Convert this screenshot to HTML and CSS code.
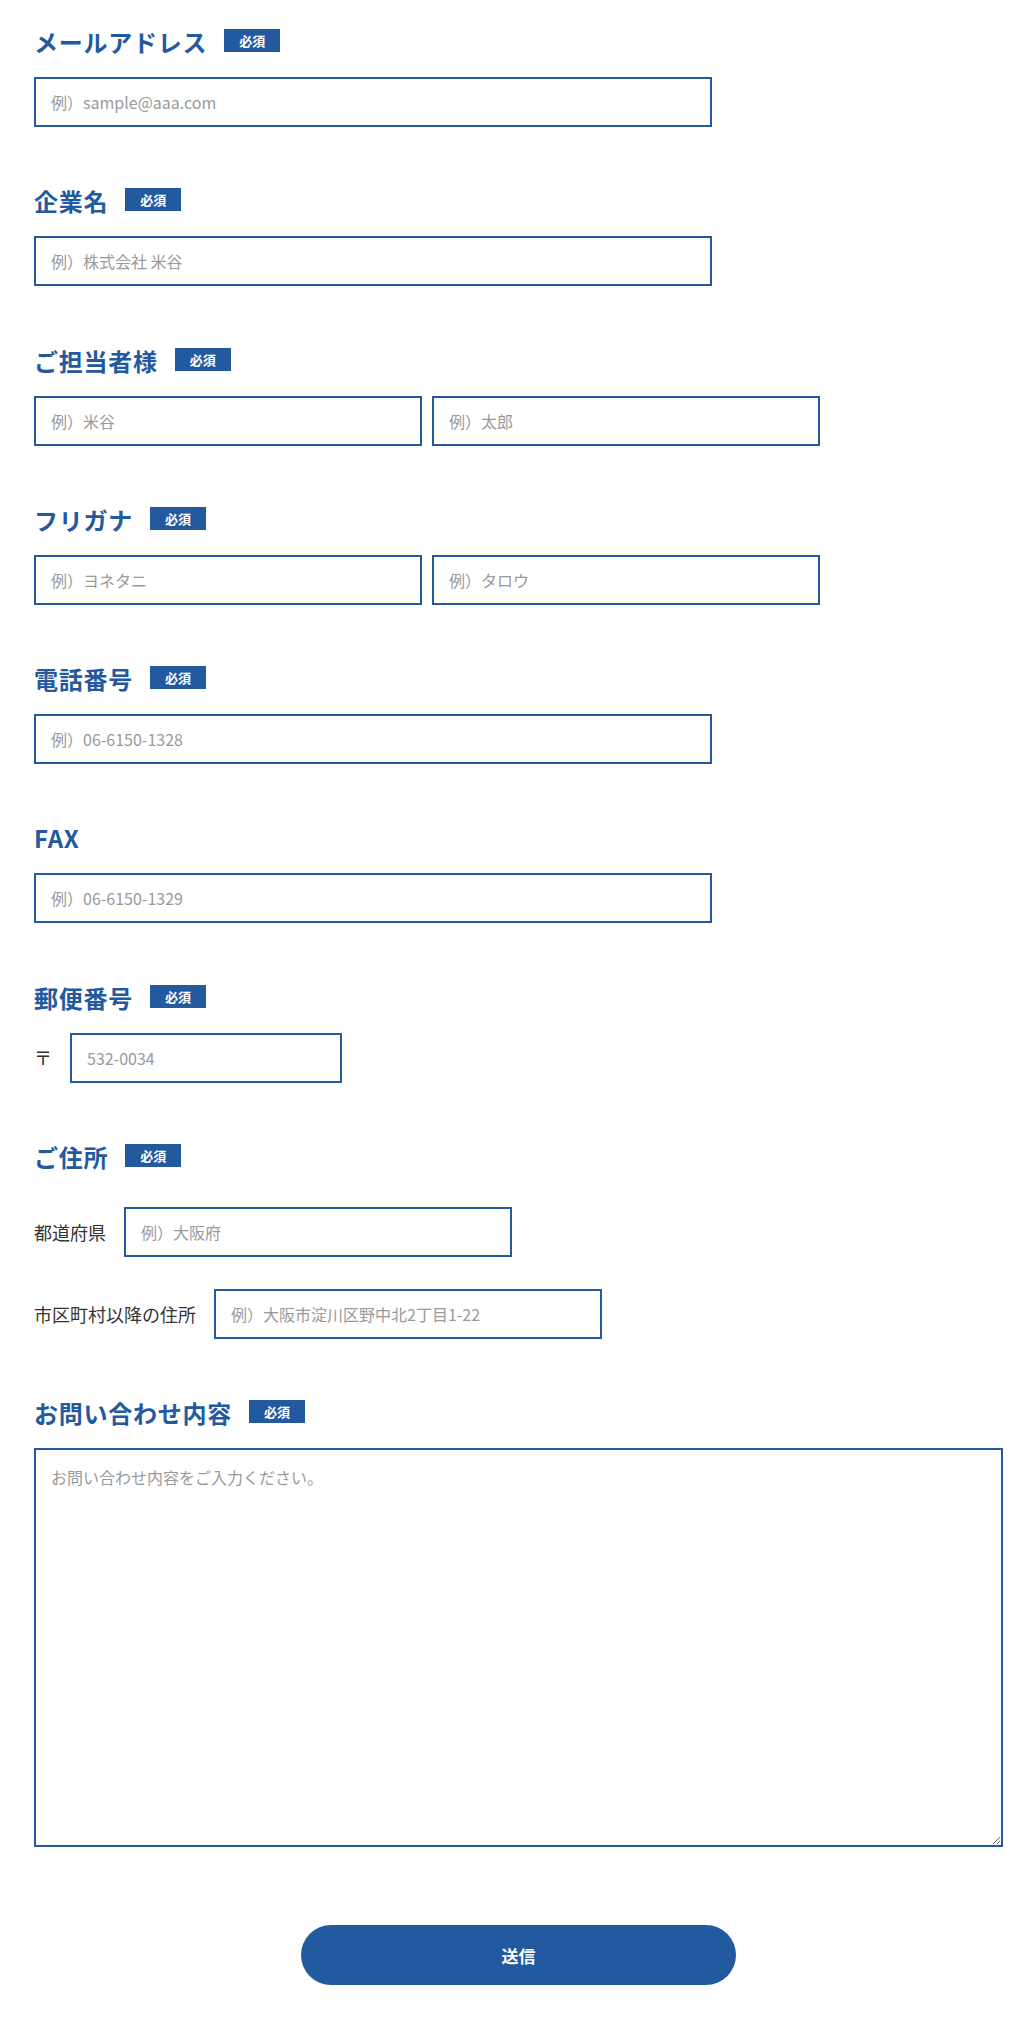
FILE: index.html
```html
<!DOCTYPE html>
<html lang="ja">
<head>
    <meta charset="UTF-8">
    <meta name="viewport" content="width=device-width, initial-scale=1.0">
    <title>お問い合わせ</title>
    <link rel="stylesheet" href="styles.css">
</head>
<body>
    <form class="contact-form" onsubmit="return false;">
        <div class="field">
            <div class="field-label">メールアドレス<span class="badge">必須</span></div>
            <input class="input input-wide" type="email" placeholder="例）sample@aaa.com">
        </div>

        <div class="field">
            <div class="field-label">企業名<span class="badge">必須</span></div>
            <input class="input input-wide" type="text" placeholder="例）株式会社 米谷">
        </div>

        <div class="field">
            <div class="field-label">ご担当者様<span class="badge">必須</span></div>
            <div class="pair">
                <input class="input input-half" type="text" placeholder="例）米谷">
                <input class="input input-half" type="text" placeholder="例）太郎">
            </div>
        </div>

        <div class="field">
            <div class="field-label">フリガナ<span class="badge">必須</span></div>
            <div class="pair">
                <input class="input input-half" type="text" placeholder="例）ヨネタニ">
                <input class="input input-half" type="text" placeholder="例）タロウ">
            </div>
        </div>

        <div class="field">
            <div class="field-label">電話番号<span class="badge">必須</span></div>
            <input class="input input-wide" type="tel" placeholder="例）06-6150-1328">
        </div>

        <div class="field">
            <div class="field-label">FAX</div>
            <input class="input input-wide" type="tel" placeholder="例）06-6150-1329">
        </div>

        <div class="field">
            <div class="field-label">郵便番号<span class="badge">必須</span></div>
            <div class="inline-row">
                <span class="row-label">〒</span>
                <input class="input input-zip" type="text" placeholder="532-0034">
            </div>
        </div>

        <div class="field">
            <div class="field-label tight">ご住所<span class="badge">必須</span></div>
            <div class="inline-row addr-row">
                <span class="row-label">都道府県</span>
                <input class="input input-addr" type="text" placeholder="例）大阪府">
            </div>
            <div class="inline-row addr-row">
                <span class="row-label">市区町村以降の住所</span>
                <input class="input input-addr" type="text" placeholder="例）大阪市淀川区野中北2丁目1-22">
            </div>
        </div>

        <div class="field last">
            <div class="field-label">お問い合わせ内容<span class="badge">必須</span></div>
            <textarea class="message" placeholder="お問い合わせ内容をご入力ください。"></textarea>
        </div>

        <div class="submit-area">
            <button class="submit" type="submit">送信</button>
        </div>
    </form>
</body>
</html>
```

FILE: styles.css
```css
body {
    margin: 0;
    background: #fff;
    font-family: "Noto Sans CJK JP", "Noto Sans", sans-serif;
    color: #333;
}
.contact-form {
    width: 969px;
    margin-left: 34px;
    padding-top: 24px;
}
.field {
    margin-bottom: 56.3px;
}
.field.last {
    margin-bottom: 0;
}
.field-label {
    display: flex;
    align-items: center;
    font-size: 24px;
    line-height: 36px;
    font-weight: 700;
    letter-spacing: 0.75px;
    color: #235a9f;
    margin-bottom: 17px;
}
.field-label.tight {
    margin-bottom: 0;
}
.badge {
    display: flex;
    align-items: center;
    justify-content: center;
    width: 56px;
    height: 23px;
    margin-left: 17px;
    margin-bottom: 3px;
    background: #235a9f;
    color: #fff;
    font-size: 13px;
    line-height: 1;
    font-weight: 700;
    letter-spacing: 0;
}
.input {
    display: block;
    box-sizing: border-box;
    height: 50px;
    padding: 0 15px;
    border: 2px solid #235a9f;
    border-radius: 0;
    background: #fff;
    font-family: "Noto Sans CJK JP", "Noto Sans", sans-serif;
    font-size: 16px;
    color: #333;
    outline: none;
}
.input::placeholder,
.message::placeholder {
    color: #9a9a9a;
}
.input-wide {
    width: 678px;
}
.pair {
    display: flex;
    gap: 10px;
}
.input-half {
    width: 388px;
}
.inline-row {
    display: flex;
    align-items: center;
}
.addr-row {
    margin-top: 32px;
}
.row-label {
    font-size: 18px;
    line-height: 1.5;
    color: #333;
    margin-right: 18px;
}
.input-zip {
    width: 272px;
}
.input-addr {
    width: 388px;
}
.message {
    display: block;
    box-sizing: border-box;
    width: 100%;
    height: 399px;
    padding: 15px;
    border: 2px solid #235a9f;
    border-radius: 0;
    font-family: "Noto Sans CJK JP", "Noto Sans", sans-serif;
    font-size: 16px;
    line-height: 1.6;
    color: #333;
    outline: none;
}
.submit-area {
    display: flex;
    justify-content: center;
    margin-top: 78px;
}
.submit {
    width: 435px;
    height: 60px;
    border: none;
    border-radius: 30px;
    background: #235a9f;
    color: #fff;
    font-family: "Noto Sans CJK JP", "Noto Sans", sans-serif;
    font-size: 17px;
    font-weight: 700;
    cursor: pointer;
}
```
